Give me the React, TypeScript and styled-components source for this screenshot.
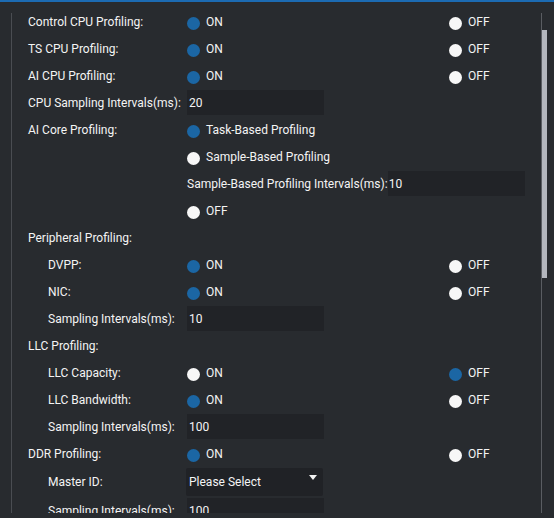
import React from "react";
import styled, { createGlobalStyle } from "styled-components";

const Global = createGlobalStyle`
  html, body { margin: 0; padding: 0; }
  body {
    background: #282b2f;
    border-top: 2px solid #1c6bb3;
    height: 516px;
    overflow: hidden;
    font-family: Roboto, "Liberation Sans", Arial, sans-serif;
    font-size: 12px;
    color: #f4f4f4;
  }
`;

const Panel = styled.div`
  display: flex;
  height: 511px;
  margin: 0 7px 0 11px;
  overflow: hidden;
`;

const LeftRule = styled.div`
  width: 1px;
  margin-top: 11px;
  background: #4a4d52;
  flex: none;
`;

const Content = styled.div`
  flex: 1;
  display: flex;
  flex-direction: column;
  padding: 6px 0 0 16px;
  overflow: hidden;
`;

const ScrollTrack = styled.div`
  width: 5px;
  margin-top: 11px;
  border-left: 1px solid #5a5d62;
  flex: none;
`;

const ScrollThumb = styled.div`
  width: 5px;
  height: 248px;
  margin-top: 17px;
  background: #b3b6bd;
`;

const Row = styled.div<{ $tall?: boolean }>`
  display: flex;
  align-items: center;
  height: ${(p) => (p.$tall ? 30 : 27)}px;
  flex: none;
`;

const Label = styled.div<{ $indent?: boolean }>`
  width: ${(p) => (p.$indent ? 139 : 159)}px;
  padding-left: ${(p) => (p.$indent ? 20 : 0)}px;
  flex: none;
  white-space: nowrap;
`;

const Option = styled.div<{ $wide?: boolean }>`
  display: flex;
  align-items: center;
  gap: 6px;
  width: ${(p) => (p.$wide ? 262 : "auto")}px;
  flex: none;
  white-space: nowrap;
`;

const Dot = styled.span<{ $on?: boolean }>`
  width: 13px;
  height: 13px;
  margin-top: 3px;
  border-radius: 50%;
  background: ${(p) => (p.$on ? "#1b66a4" : "#f7f7f7")};
  flex: none;
`;

const Field = styled.div<{ $tight?: boolean }>`
  width: ${(p) => (p.$tight ? 136 : 135)}px;
  height: 25px;
  padding-left: ${(p) => (p.$tight ? 1 : 2)}px;
  display: flex;
  align-items: center;
  background: #212327;
  flex: none;
`;

const InlineText = styled.span`
  white-space: nowrap;
`;

const Select = styled.div`
  width: 134px;
  height: 28px;
  margin-left: -1px;
  padding-left: 3px;
  display: flex;
  align-items: center;
  justify-content: space-between;
  background: #202226;
  border-radius: 2px;
  flex: none;
`;

const Caret = styled.svg`
  width: 8px;
  height: 5px;
  margin: 0 6px 10px 0;
  fill: #f2f2f2;
`;

const Radio = ({ on, text, wide }: { on: boolean; text: string; wide?: boolean }) => (
  <Option $wide={wide}>
    <Dot $on={on} />
    {text}
  </Option>
);

const ToggleRow = ({ label, on, indent }: { label: string; on: boolean; indent?: boolean }) => (
  <Row>
    <Label $indent={indent}>{label}</Label>
    <Radio on={on} text="ON" wide />
    <Radio on={!on} text="OFF" />
  </Row>
);

const InputRow = ({ label, value, indent }: { label: string; value: string; indent?: boolean }) => (
  <Row>
    <Label $indent={indent}>{label}</Label>
    <Field>{value}</Field>
  </Row>
);

export default function App() {
  return (
    <>
      <Global />
      <Panel>
        <LeftRule />
        <Content>
          <ToggleRow label="Control CPU Profiling:" on />
          <ToggleRow label="TS CPU Profiling:" on />
          <ToggleRow label="AI CPU Profiling:" on />
          <InputRow label="CPU Sampling Intervals(ms):" value="20" />
          <Row>
            <Label>AI Core Profiling:</Label>
            <Radio on text="Task-Based Profiling" />
          </Row>
          <Row>
            <Label />
            <Radio on={false} text="Sample-Based Profiling" />
          </Row>
          <Row>
            <Label />
            <InlineText>Sample-Based Profiling Intervals(ms):</InlineText>
            <Field $tight>10</Field>
          </Row>
          <Row>
            <Label />
            <Radio on={false} text="OFF" />
          </Row>
          <Row>
            <Label>Peripheral Profiling:</Label>
          </Row>
          <ToggleRow label="DVPP:" on indent />
          <ToggleRow label="NIC:" on indent />
          <InputRow label="Sampling Intervals(ms):" value="10" indent />
          <Row>
            <Label>LLC Profiling:</Label>
          </Row>
          <ToggleRow label="LLC Capacity:" on={false} indent />
          <ToggleRow label="LLC Bandwidth:" on indent />
          <InputRow label="Sampling Intervals(ms):" value="100" indent />
          <ToggleRow label="DDR Profiling:" on />
          <Row $tall>
            <Label $indent>Master ID:</Label>
            <Select>
              Please Select
              <Caret viewBox="0 0 8 5">
                <path d="M0 0 L8 0 L4 5 Z" />
              </Caret>
            </Select>
          </Row>
          <InputRow label="Sampling Intervals(ms):" value="100" indent />
        </Content>
        <ScrollTrack>
          <ScrollThumb />
        </ScrollTrack>
      </Panel>
    </>
  );
}
